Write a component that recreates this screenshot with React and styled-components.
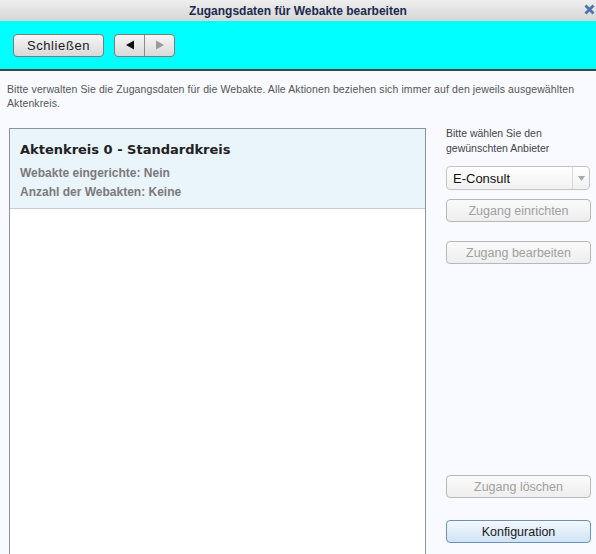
import React from "react";
import styled, { createGlobalStyle } from "styled-components";

const Global = createGlobalStyle`
  html, body { margin: 0; padding: 0; }
  body {
    font-family: "Liberation Sans", Arial, sans-serif;
    background: #f8faff;
    overflow: hidden;
  }
`;

const Window = styled.div`
  width: 596px;
  height: 554px;
  display: flex;
  flex-direction: column;
  overflow: hidden;
  background: #f8faff;
`;

const TitleBar = styled.div`
  height: 21px;
  display: flex;
  align-items: center;
  justify-content: center;
  position: relative;
  background: linear-gradient(#eeeeee, #d6d6d6);
  color: #1b2a4e;
  font-weight: bold;
  font-size: 12px;
`;

const CloseIcon = styled.svg`
  position: absolute;
  right: 1px;
  top: 4px;
`;

const Toolbar = styled.div`
  height: 48px;
  background: #00ffff;
  border-bottom: 2px solid #444;
  display: flex;
  align-items: center;
  gap: 10px;
  padding: 0 13px;
`;

const Button = styled.button`
  height: 23px;
  width: ${(p) => p.width || 145}px;
  border-radius: 4px;
  border: 1px solid ${(p) => (p.primary ? "#6d90b8" : p.disabled ? "#b8b8b8" : "#7c7c7c")};
  background: ${(p) =>
    p.primary
      ? "linear-gradient(#f3f8fd, #cfe3f5)"
      : p.disabled
      ? "linear-gradient(#fafafa, #eeeeee)"
      : "linear-gradient(#f6f6f6, #d9d9d9)"};
  color: ${(p) => (p.disabled ? "#a0a0a0" : "#1a1a1a")};
  font-family: "Liberation Sans", Arial, sans-serif;
  font-size: ${(p) => p.size || 12.5}px;
  letter-spacing: ${(p) => p.spacing || 0}px;
  padding: 0;
  cursor: default;
`;

const NavGroup = styled.div`
  display: flex;
  height: 23px;
  border: 1px solid #7c7c7c;
  border-radius: 4px;
  background: linear-gradient(#f6f6f6, #d9d9d9);
  overflow: hidden;
  box-sizing: border-box;
`;

const NavButton = styled.div`
  width: 29px;
  display: flex;
  align-items: center;
  justify-content: center;
  border-left: ${(p) => (p.divided ? "1px solid #8a8a8a" : "none")};
`;

const Description = styled.div`
  padding: 11px 7px 0;
  font-size: 10.5px;
  letter-spacing: 0.1px;
  line-height: 14px;
  color: #555;
`;

const Content = styled.div`
  flex: 1;
  display: flex;
  gap: 20px;
  padding: 18px 0 0 9px;
  min-height: 0;
`;

const List = styled.div`
  width: 415px;
  height: 500px;
  flex-shrink: 0;
  border: 1px solid #8d929c;
  background: #fff;
`;

const ListItem = styled.div`
  height: 80px;
  background: #eaf4fb;
  border-bottom: 1px solid #c8ccd2;
  padding: 13px 10px 0;
  box-sizing: border-box;
`;

const ItemTitle = styled.div`
  font-family: "DejaVu Sans", sans-serif;
  font-size: 13px;
  font-weight: bold;
  color: #222;
  margin-bottom: 7px;
`;

const ItemInfo = styled.div`
  font-size: 12px;
  font-weight: bold;
  color: #7a7a7a;
  line-height: 19px;
`;

const Side = styled.div`
  width: 144px;
  display: flex;
  flex-direction: column;
  padding-bottom: 11px;
`;

const SideLabel = styled.div`
  font-size: 10.5px;
  line-height: 15px;
  color: #444;
  margin: -2px 0 10px;
`;

const Select = styled.div`
  height: 24px;
  border: 1px solid #c4c4c4;
  border-radius: 4px;
  background: linear-gradient(#ffffff, #f0f0f0);
  display: flex;
  align-items: center;
  box-sizing: border-box;
  font-size: 13px;
  color: #111;
  margin-bottom: 9px;
`;

const SelectText = styled.div`
  flex: 1;
  padding-left: 6px;
`;

const SelectArrow = styled.div`
  width: 16px;
  height: 100%;
  border-left: 1px solid #d8d8d8;
  display: flex;
  align-items: center;
  justify-content: center;
`;

const Spacer = styled.div`
  flex: 1;
`;

const Gap = styled.div`
  height: ${(p) => p.h}px;
  flex-shrink: 0;
`;

export default function App() {
  return (
    <Window>
      <Global />
      <TitleBar>
        Zugangsdaten für Webakte bearbeiten
        <CloseIcon width="11" height="11" viewBox="0 0 11 11">
          <path d="M1.5 1.5 L9.5 9.5 M9.5 1.5 L1.5 9.5" stroke="#4a74ad" strokeWidth="2.8" />
        </CloseIcon>
      </TitleBar>
      <Toolbar>
        <Button width={91} size={13} spacing={0.6}>Schließen</Button>
        <NavGroup>
          <NavButton>
            <svg width="10" height="10" viewBox="0 0 10 10">
              <path d="M1 5 L9 0.5 L9 9.5 Z" fill="#111" />
            </svg>
          </NavButton>
          <NavButton divided>
            <svg width="10" height="10" viewBox="0 0 10 10">
              <path d="M9 5 L1 0.5 L1 9.5 Z" fill="#999" />
            </svg>
          </NavButton>
        </NavGroup>
      </Toolbar>
      <Description>
        Bitte verwalten Sie die Zugangsdaten für die Webakte. Alle Aktionen beziehen sich immer auf den jeweils ausgewählten Aktenkreis.
      </Description>
      <Content>
        <List>
          <ListItem>
            <ItemTitle>Aktenkreis 0 - Standardkreis</ItemTitle>
            <ItemInfo>Webakte eingerichte: Nein</ItemInfo>
            <ItemInfo>Anzahl der Webakten: Keine</ItemInfo>
          </ListItem>
        </List>
        <Side>
          <SideLabel>
            Bitte wählen Sie den
            <br />
            gewünschten Anbieter
          </SideLabel>
          <Select>
            <SelectText>E-Consult</SelectText>
            <SelectArrow>
              <svg width="7" height="5" viewBox="0 0 7 5">
                <path d="M0 0 L7 0 L3.5 5 Z" fill="#a8a8a8" />
              </svg>
            </SelectArrow>
          </Select>
          <Button disabled>Zugang einrichten</Button>
          <Gap h={19} />
          <Button disabled>Zugang bearbeiten</Button>
          <Spacer />
          <Button disabled>Zugang löschen</Button>
          <Gap h={22} />
          <Button primary>Konfiguration</Button>
        </Side>
      </Content>
    </Window>
  );
}
